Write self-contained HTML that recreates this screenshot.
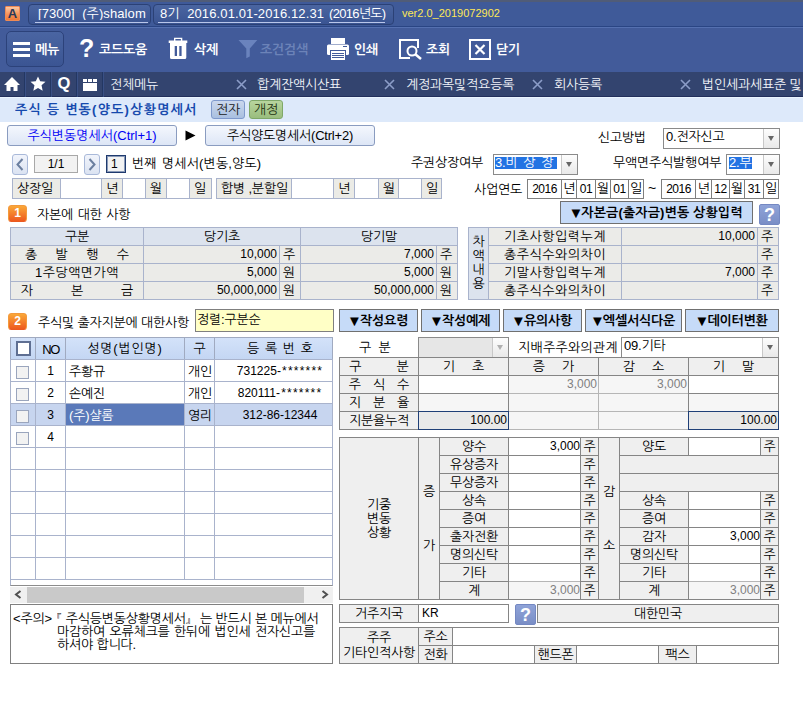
<!DOCTYPE html><html lang="ko"><head><meta charset="utf-8"><title>주식 등 변동(양도)상황명세서</title><style>
html,body{margin:0;padding:0}
body{width:803px;height:704px;position:relative;overflow:hidden;background:#fff;
 font:13px "Liberation Sans","NanumGothic","Noto Sans CJK KR",sans-serif;letter-spacing:-.2px;color:#000}
.a{position:absolute;box-sizing:border-box;white-space:nowrap;overflow:hidden}
.c{border:1px solid #a9b3cc;text-align:center}
.n{letter-spacing:0;font-size:12px}
.r{text-align:right;padding-right:2px}
.l{text-align:left;padding-left:3px}
.b{font-weight:bold}
.w{color:#fff}
.t1h{background:#dce3ee}
.t1c{background:#ebebe8}
.g{border-color:#858585}
.gl{background:#efefef}
.gw{background:#fff}
.gd{background:#f6f6f6;color:#808080}
.gh{background:linear-gradient(#d3e2f9,#c4d6f3);border-color:#a0aac0}
.gr{border-color:#a9b3cc;background:#fff;padding-top:1px}
.sel{background:#c7d5ef}
.btn{border:1px solid #8a9cc0;border-radius:3px;background:linear-gradient(#f4f7fd,#dde6f6);text-align:center}
.vb{border:1px solid #707070;background:#c6dbf8;font-weight:bold;text-align:center}
.tv{font-size:15px;line-height:10px;vertical-align:-1px;letter-spacing:-2px;margin-left:-2px;font-weight:normal}
.inp{border:1px solid #8a8a8a;background:#fff}
.cb{border:1px solid #9aa5bd;background:#f2f2f2}
.q{background:linear-gradient(#8fa3d8,#7a8ec6);border:1px solid #7488c2;border-radius:2px;color:#fff;font:bold 18px "Liberation Sans",sans-serif;text-align:center;letter-spacing:0}
.hl{background:#2273e3;color:#fff}
.dd{border-left:1px solid #c8c8c8;background:linear-gradient(#fdfdfd,#e9e9e9)}
.tri{width:0;height:0;border-left:4px solid transparent;border-right:4px solid transparent;border-top:6px solid #6a6a6a}
</style></head><body>
<div class="a " style="left:0px;top:0px;width:803px;height:2px;background:#505c78"></div>
<div class="a " style="left:0px;top:2px;width:803px;height:24px;background:#3f5a99"></div>
<div class="a " style="left:0px;top:26px;width:803px;height:1px;background:#2a4584"></div>
<div class="a " style="left:0px;top:27px;width:803px;height:1px;background:#5570b0"></div>
<div class="a " style="left:0px;top:28px;width:803px;height:44px;background:#425b9a"></div>
<div class="a " style="left:0px;top:72px;width:803px;height:24px;background:#33446f"></div>
<div class="a " style="left:0px;top:96px;width:803px;height:1px;background:#222f5c"></div>
<div class="a " style="left:0px;top:97px;width:803px;height:1px;background:#e9f4fe"></div>
<div class="a " style="left:0px;top:98px;width:803px;height:24px;background:#dde9fa"></div>
<div class="a " style="left:5px;top:6px;width:15px;height:15px;background:linear-gradient(#fbc7a2,#f6935a 55%,#f07a38);border:1px solid #ee8a55;border-radius:1px;color:#2a3858;font:bold 13px 'Liberation Sans',sans-serif;text-align:center;line-height:13px;letter-spacing:0">A</div>
<div class="a " style="left:28px;top:4px;width:123px;height:21px;border:1px solid #2b4176;border-radius:4px;background:linear-gradient(#4a65a1,#3a5492)"></div>
<div class="a " style="left:35px;top:22px;width:113px;height:1px;background:#b9c6ea"></div>
<div class="a w" style="left:38px;top:6px;width:112px;height:14px;letter-spacing:.1px">[7300]&nbsp; (주)shalom</div>
<div class="a " style="left:153px;top:4px;width:241px;height:21px;border:1px solid #2b4176;border-radius:4px;background:linear-gradient(#4a65a1,#3a5492)"></div>
<div class="a " style="left:158px;top:22px;width:163px;height:1px;background:#b9c6ea"></div>
<div class="a " style="left:329px;top:22px;width:56px;height:1px;background:#b9c6ea"></div>
<div class="a w" style="left:160px;top:6px;width:170px;height:14px;letter-spacing:.12px">8기&nbsp; 2016.01.01-2016.12.31</div>
<div class="a w" style="left:329px;top:6px;width:63px;height:14px;letter-spacing:-.7px">(2016년도)</div>
<div class="a " style="left:402px;top:7px;width:118px;height:14px;color:#fde857;font-size:11px;letter-spacing:0">ver2.0_2019072902</div>
<div class="a " style="left:6px;top:31px;width:58px;height:36px;border:1px solid #2c427a;border-radius:5px;background:linear-gradient(#4a65a2,#3b5593)"></div>
<div class="a " style="left:13px;top:42px;width:17px;height:3px;background:#fff"></div>
<div class="a " style="left:13px;top:48px;width:17px;height:3px;background:#fff"></div>
<div class="a " style="left:13px;top:54px;width:17px;height:3px;background:#fff"></div>
<div class="a w b" style="left:35px;top:42px;width:29px;height:16px;">메뉴</div>
<div class="a w" style="left:79px;top:34px;width:16px;height:28px;font:bold 25px 'Liberation Sans',sans-serif;letter-spacing:0;line-height:28px">?</div>
<div class="a w b" style="left:99px;top:42px;width:51px;height:16px;">코드도움</div>
<svg class="a" style="left:168px;top:37px" width="20" height="23" viewBox="0 0 20 23"><path fill="#fff" d="M6 .7h8.300v3H6z M.7 3.600h18.600v2.500H.7z M2 6h16.300v14.500a1.500 1.500 0 0 1-1.500 1.500H3.500a1.500 1.500 0 0 1-1.500-1.500z"/><path fill="#425b9a" d="M7.400 2h5.500v1.600H7.400z M6.700 9h2.300v10H6.700z M11.300 9h2.300v10h-2.300z"/></svg>
<div class="a w b" style="left:194px;top:42px;width:31px;height:16px;">삭제</div>
<svg class="a" style="left:238px;top:40px" width="20" height="19" viewBox="0 0 20 19"><path fill="#6a83bd" d="M.5 0H19.300L11.800 8.500V16.500L8.300 18.200V8.500z"/></svg>
<div class="a b" style="left:260px;top:42px;width:52px;height:16px;color:#6c83b8;">조건검색</div>
<svg class="a" style="left:326px;top:38px" width="24" height="23" viewBox="0 0 24 23"><path fill="#fff" d="M5 0h14v6H5z"/><rect x="1" y="6.400" width="22" height="10.600" rx="1.500" fill="#fff"/><path fill="#425b9a" shape-rendering="crispEdges" d="M17 8h4v1h-4z M4 12h16v5H4z"/><path fill="#fff" shape-rendering="crispEdges" d="M5 13h14v9H5z"/><path fill="#425b9a" shape-rendering="crispEdges" d="M6 15h12v1H6z M6 17h12v1H6z M6 19h12v1H6z"/></svg>
<div class="a w b" style="left:354px;top:42px;width:31px;height:16px;">인쇄</div>
<svg class="a" style="left:398px;top:38px" width="26" height="24" viewBox="0 0 26 24"><path fill="none" stroke="#fff" stroke-width="2" d="M12 20H2V2h18v8"/><circle cx="14" cy="13" r="4.5" fill="none" stroke="#fff" stroke-width="2"/><path stroke="#fff" stroke-width="2.5" d="M17 16l6 5"/></svg>
<div class="a w b" style="left:426px;top:42px;width:32px;height:16px;">조회</div>
<svg class="a" style="left:469px;top:39px" width="22" height="22" viewBox="0 0 22 22"><rect x="1" y="1" width="20" height="19" fill="none" stroke="#fff" stroke-width="2"/><path stroke="#fff" stroke-width="2.2" d="M6.5 6l9 9M15.500 6l-9 9"/></svg>
<div class="a w b" style="left:496px;top:42px;width:31px;height:16px;">닫기</div>
<div class="a " style="left:24px;top:72px;width:1px;height:25px;background:#233763"></div>
<div class="a " style="left:25px;top:72px;width:1px;height:25px;background:#3a5085"></div>
<div class="a " style="left:50px;top:72px;width:1px;height:25px;background:#233763"></div>
<div class="a " style="left:51px;top:72px;width:1px;height:25px;background:#3a5085"></div>
<div class="a " style="left:76px;top:72px;width:1px;height:25px;background:#233763"></div>
<div class="a " style="left:77px;top:72px;width:1px;height:25px;background:#3a5085"></div>
<div class="a " style="left:102px;top:72px;width:1px;height:25px;background:#233763"></div>
<div class="a " style="left:103px;top:72px;width:1px;height:25px;background:#3a5085"></div>
<svg class="a" style="left:3px;top:76px" width="18" height="16" viewBox="0 0 18 16"><path fill="#fff" d="M9 1l8 8h-2.500v6h-4v-4h-3v4h-4V9H1z"/></svg>
<svg class="a" style="left:30px;top:76px" width="16" height="15" viewBox="0 0 18 17"><path fill="#fff" d="M9 0.500l2.500 5.500 6 .6-4.500 4 1.300 6L9 13.500 3.700 16.600l1.300-6-4.500-4 6-.6z"/></svg>
<div class="a w" style="left:54px;top:73px;width:20px;height:20px;font:bold 16.500px 'Liberation Sans',sans-serif;letter-spacing:0;line-height:20px;text-align:center">Q</div>
<svg class="a" style="left:83px;top:79px" width="14" height="12" viewBox="0 0 14 12"><path fill="#fff" d="M0 0h4v3H0z M5 0h4v3H5z M10 0h4v3h-4z M0 4h14v8H0z"/></svg>
<div class="a w" style="left:110px;top:77px;width:140px;height:16px;line-height:16px;color:#f2f4fa">전체메뉴</div>
<div class="a w" style="left:257px;top:77px;width:140px;height:16px;line-height:16px;color:#f2f4fa">합계잔액시산표</div>
<svg class="a" style="left:236px;top:79px" width="11" height="11" viewBox="0 0 11 11"><path stroke="#8c9dc8" stroke-width="1.600" d="M1 1l9 9M10 1l-9 9"/></svg>
<div class="a w" style="left:406px;top:77px;width:140px;height:16px;line-height:16px;color:#f2f4fa">계정과목및적요등록</div>
<svg class="a" style="left:384px;top:79px" width="11" height="11" viewBox="0 0 11 11"><path stroke="#8c9dc8" stroke-width="1.600" d="M1 1l9 9M10 1l-9 9"/></svg>
<div class="a w" style="left:554px;top:77px;width:140px;height:16px;line-height:16px;color:#f2f4fa">회사등록</div>
<svg class="a" style="left:532px;top:79px" width="11" height="11" viewBox="0 0 11 11"><path stroke="#8c9dc8" stroke-width="1.600" d="M1 1l9 9M10 1l-9 9"/></svg>
<div class="a w" style="left:702px;top:77px;width:140px;height:16px;line-height:16px;color:#f2f4fa">법인세과세표준 및</div>
<svg class="a" style="left:680px;top:79px" width="11" height="11" viewBox="0 0 11 11"><path stroke="#8c9dc8" stroke-width="1.600" d="M1 1l9 9M10 1l-9 9"/></svg>
<div class="a b" style="left:15px;top:102px;width:215px;height:16px;color:#1549ad;letter-spacing:1.25px;line-height:16px">주식 등 변동(양도)상황명세서</div>
<div class="a " style="left:211px;top:100px;width:34px;height:19px;border:1px solid #7f99cc;border-radius:3px;background:linear-gradient(#cbd8ed,#a9bfe0);text-align:center;line-height:17px;color:#1a1a1a">전자</div>
<div class="a " style="left:249px;top:100px;width:34px;height:19px;border:1px solid #7fa868;border-radius:3px;background:linear-gradient(#b8d59e,#9abd7e);text-align:center;line-height:17px;color:#1f3312">개정</div>
<div class="a btn" style="left:7px;top:125px;width:170px;height:21px;line-height:19px;color:#0000f5;letter-spacing:0">주식변동명세서(Ctrl+1)</div>
<svg class="a" style="left:185px;top:130px" width="11" height="11" viewBox="0 0 11 11"><path d="M0.500 0.500L10.500 5.500L0.500 10.500z" fill="#000"/></svg>
<div class="a btn" style="left:205px;top:125px;width:170px;height:21px;line-height:19px">주식양도명세서(Ctrl+2)</div>
<div class="a " style="left:598px;top:130px;width:52px;height:16px;line-height:16px">신고방법</div>
<div class="a inp" style="left:663px;top:128px;width:117px;height:21px;background:#fff"></div>
<div class="a dd" style="left:763px;top:129px;width:16px;height:19px;"></div>
<div class="a" style="left:768px;top:136px;width:0;height:0;border-left:3.500px solid transparent;border-right:3.500px solid transparent;border-top:5px solid #666"></div>
<div class="a " style="left:666px;top:130px;width:96px;height:17px;line-height:14px">0.전자신고</div>
<div class="a " style="left:411px;top:155px;width:79px;height:16px;line-height:16px">주권상장여부</div>
<div class="a inp" style="left:493px;top:154px;width:85px;height:21px;background:#fff"></div>
<div class="a dd" style="left:561px;top:155px;width:16px;height:19px;"></div>
<div class="a" style="left:566px;top:162px;width:0;height:0;border-left:3.500px solid transparent;border-right:3.500px solid transparent;border-top:5px solid #666"></div>
<div class="a hl" style="left:495px;top:157px;width:62px;height:12px;line-height:11px;word-spacing:2.5px">3.비 상 장</div>
<div class="a " style="left:613px;top:155px;width:112px;height:16px;line-height:16px">무액면주식발행여부</div>
<div class="a inp" style="left:726px;top:154px;width:54px;height:21px;background:#fff"></div>
<div class="a dd" style="left:763px;top:155px;width:16px;height:19px;"></div>
<div class="a" style="left:768px;top:162px;width:0;height:0;border-left:3.500px solid transparent;border-right:3.500px solid transparent;border-top:5px solid #666"></div>
<div class="a hl" style="left:729px;top:157px;width:23px;height:12px;line-height:11px;word-spacing:2.5px">2.부</div>
<div class="a btn" style="left:12px;top:154px;width:16px;height:21px;border-color:#a9b9d9;background:linear-gradient(#f1f4fb,#dbe3f2)"></div>
<svg class="a" style="left:12px;top:154px" width="16" height="21" viewBox="0 0 16 21"><path d="M10.500 5L5.500 10.500L10.500 16" fill="none" stroke="#6b7f9f" stroke-width="2"/></svg>
<div class="a " style="left:34px;top:155px;width:44px;height:18px;border:1px solid #a8a8a8;background:#f2f2f2;font-size:12px;text-align:center;line-height:16px;letter-spacing:0">1/1</div>
<div class="a btn" style="left:84px;top:154px;width:16px;height:21px;border-color:#a9b9d9;background:linear-gradient(#f1f4fb,#dbe3f2)"></div>
<svg class="a" style="left:84px;top:154px" width="16" height="21" viewBox="0 0 16 21"><path d="M5.500 5L10.500 10.500L5.500 16" fill="none" stroke="#6b7f9f" stroke-width="2"/></svg>
<div class="a " style="left:106px;top:155px;width:20px;height:18px;border:1px solid #1f3a6e;box-shadow:inset 0 0 0 1px #8a9ab8;background:#f2f2f2;padding-left:4px;font-size:12px;line-height:16px;letter-spacing:0">1</div>
<div class="a " style="left:132px;top:156px;width:168px;height:16px;line-height:16px;letter-spacing:.15px;word-spacing:1.5px">번째 명세서(변동,양도)</div>
<div class="a c " style="left:12px;top:178px;width:49px;height:21px;line-height:19px;border-color:#a9b3cc;background:#ebebe6;text-align:left;padding-left:4px">상장일</div>
<div class="a c " style="left:60px;top:178px;width:42px;height:21px;line-height:19px;border-color:#a9b3cc;background:#fff"></div>
<div class="a c " style="left:101px;top:178px;width:22px;height:21px;line-height:19px;border-color:#a9b3cc;background:#ebebe6;text-align:left;padding-left:4px">년</div>
<div class="a c " style="left:122px;top:178px;width:24px;height:21px;line-height:19px;border-color:#a9b3cc;background:#fff"></div>
<div class="a c " style="left:145px;top:178px;width:22px;height:21px;line-height:19px;border-color:#a9b3cc;background:#ebebe6;text-align:left;padding-left:4px">월</div>
<div class="a c " style="left:166px;top:178px;width:24px;height:21px;line-height:19px;border-color:#a9b3cc;background:#fff"></div>
<div class="a c " style="left:189px;top:178px;width:23px;height:21px;line-height:19px;border-color:#a9b3cc;background:#ebebe6;text-align:left;padding-left:4px">일</div>
<div class="a c " style="left:216px;top:178px;width:76px;height:21px;line-height:19px;border-color:#a9b3cc;background:#ebebe6;text-align:left;padding-left:4px">합병 ,분할일</div>
<div class="a c " style="left:291px;top:178px;width:43px;height:21px;line-height:19px;border-color:#a9b3cc;background:#fff"></div>
<div class="a c " style="left:333px;top:178px;width:22px;height:21px;line-height:19px;border-color:#a9b3cc;background:#ebebe6;text-align:left;padding-left:4px">년</div>
<div class="a c " style="left:354px;top:178px;width:25px;height:21px;line-height:19px;border-color:#a9b3cc;background:#fff"></div>
<div class="a c " style="left:378px;top:178px;width:21px;height:21px;line-height:19px;border-color:#a9b3cc;background:#ebebe6;text-align:left;padding-left:4px">월</div>
<div class="a c " style="left:398px;top:178px;width:24px;height:21px;line-height:19px;border-color:#a9b3cc;background:#fff"></div>
<div class="a c " style="left:421px;top:178px;width:21px;height:21px;line-height:19px;border-color:#a9b3cc;background:#ebebe6;text-align:left;padding-left:4px">일</div>
<div class="a " style="left:474px;top:182px;width:51px;height:16px;line-height:16px">사업연도</div>
<div class="a c n" style="left:527px;top:179px;width:35px;height:20px;line-height:18px;border-color:#7f7f7f;background:#fff;letter-spacing:-.5px">2016</div>
<div class="a c " style="left:561px;top:179px;width:16px;height:20px;line-height:18px;border-color:#7f7f7f;background:#fff">년</div>
<div class="a c n" style="left:576px;top:179px;width:20px;height:20px;line-height:18px;border-color:#7f7f7f;background:#fff;letter-spacing:-.5px">01</div>
<div class="a c " style="left:595px;top:179px;width:16px;height:20px;line-height:18px;border-color:#7f7f7f;background:#fff">월</div>
<div class="a c n" style="left:610px;top:179px;width:19px;height:20px;line-height:18px;border-color:#7f7f7f;background:#fff;letter-spacing:-.5px">01</div>
<div class="a c " style="left:628px;top:179px;width:16px;height:20px;line-height:18px;border-color:#7f7f7f;background:#fff">일</div>
<div class="a " style="left:648px;top:180px;width:12px;height:16px;line-height:16px;letter-spacing:0;font-size:14px">~</div>
<div class="a c n" style="left:661px;top:179px;width:35px;height:20px;line-height:18px;border-color:#7f7f7f;background:#fff;letter-spacing:-.5px">2016</div>
<div class="a c " style="left:695px;top:179px;width:17px;height:20px;line-height:18px;border-color:#7f7f7f;background:#fff">년</div>
<div class="a c n" style="left:711px;top:179px;width:19px;height:20px;line-height:18px;border-color:#7f7f7f;background:#fff;letter-spacing:-.5px">12</div>
<div class="a c " style="left:729px;top:179px;width:16px;height:20px;line-height:18px;border-color:#7f7f7f;background:#fff">월</div>
<div class="a c n" style="left:744px;top:179px;width:20px;height:20px;line-height:18px;border-color:#7f7f7f;background:#fff;letter-spacing:-.5px">31</div>
<div class="a c " style="left:763px;top:179px;width:16px;height:20px;line-height:18px;border-color:#7f7f7f;background:#fff">일</div>
<div class="a " style="left:8px;top:205px;width:19px;height:17px;background:linear-gradient(#faa838,#ee5a1e);border:1px solid #f39a3c;border-bottom-color:#ea5a20;border-radius:3.500px;color:#fff;font:bold 12px 'Liberation Sans',sans-serif;text-align:center;line-height:15px;letter-spacing:0">1</div>
<div class="a " style="left:37px;top:207px;width:163px;height:16px;line-height:16px;word-spacing:1.2px">자본에 대한 사항</div>
<div class="a vb" style="left:560px;top:201px;width:193px;height:23px;line-height:22px;letter-spacing:.15px"><span class="tv">▼</span>자본금(출자금)변동 상황입력</div>
<div class="a q" style="left:759px;top:204px;width:21px;height:21px;line-height:20px">?</div>
<div class="a c t1h" style="left:10px;top:227px;width:134px;height:19px;line-height:17px;">구분</div>
<div class="a c t1h" style="left:143px;top:227px;width:158px;height:19px;line-height:17px;">당기초</div>
<div class="a c t1h" style="left:300px;top:227px;width:158px;height:19px;line-height:17px;">당기말</div>
<div class="a c t1c" style="left:10px;top:245px;width:134px;height:19px;line-height:17px;"><span style='letter-spacing:18.3px;margin-right:-18.3px'>총발행수</span></div>
<div class="a c t1c r n" style="left:143px;top:245px;width:137px;height:19px;line-height:17px;">10,000</div>
<div class="a c t1c l" style="left:279px;top:245px;width:22px;height:19px;line-height:17px;">주</div>
<div class="a c t1c r n" style="left:300px;top:245px;width:137px;height:19px;line-height:17px;">7,000</div>
<div class="a c t1c l" style="left:436px;top:245px;width:22px;height:19px;line-height:17px;">주</div>
<div class="a c t1c" style="left:10px;top:263px;width:134px;height:19px;line-height:17px;"><span style='letter-spacing:.5px'>1주당액면가액</span></div>
<div class="a c t1c r n" style="left:143px;top:263px;width:137px;height:19px;line-height:17px;">5,000</div>
<div class="a c t1c l" style="left:279px;top:263px;width:22px;height:19px;line-height:17px;">원</div>
<div class="a c t1c r n" style="left:300px;top:263px;width:137px;height:19px;line-height:17px;">5,000</div>
<div class="a c t1c l" style="left:436px;top:263px;width:22px;height:19px;line-height:17px;">원</div>
<div class="a c t1c" style="left:10px;top:281px;width:134px;height:19px;line-height:17px;"><span style='letter-spacing:37.8px;margin-right:-37.8px'>자본금</span></div>
<div class="a c t1c r n" style="left:143px;top:281px;width:137px;height:19px;line-height:17px;">50,000,000</div>
<div class="a c t1c l" style="left:279px;top:281px;width:22px;height:19px;line-height:17px;">원</div>
<div class="a c t1c r n" style="left:300px;top:281px;width:137px;height:19px;line-height:17px;">50,000,000</div>
<div class="a c t1c l" style="left:436px;top:281px;width:22px;height:19px;line-height:17px;">원</div>
<div class="a c t1h" style="left:468px;top:227px;width:21px;height:73px;line-height:71px;line-height:14px;white-space:normal;padding-top:7px">차<br>액<br>내<br>용</div>
<div class="a c t1c" style="left:488px;top:227px;width:134px;height:19px;line-height:17px;letter-spacing:.55px">기초사항입력누계</div>
<div class="a c t1c r n" style="left:621px;top:227px;width:137px;height:19px;line-height:17px;">10,000</div>
<div class="a c t1c l" style="left:757px;top:227px;width:22px;height:19px;line-height:17px;">주</div>
<div class="a c t1c" style="left:488px;top:245px;width:134px;height:19px;line-height:17px;letter-spacing:.55px">총주식수와의차이</div>
<div class="a c t1c r n" style="left:621px;top:245px;width:137px;height:19px;line-height:17px;"></div>
<div class="a c t1c l" style="left:757px;top:245px;width:22px;height:19px;line-height:17px;">주</div>
<div class="a c t1c" style="left:488px;top:263px;width:134px;height:19px;line-height:17px;letter-spacing:.55px">기말사항입력누계</div>
<div class="a c t1c r n" style="left:621px;top:263px;width:137px;height:19px;line-height:17px;">7,000</div>
<div class="a c t1c l" style="left:757px;top:263px;width:22px;height:19px;line-height:17px;">주</div>
<div class="a c t1c" style="left:488px;top:281px;width:134px;height:19px;line-height:17px;letter-spacing:.55px">총주식수와의차이</div>
<div class="a c t1c r n" style="left:621px;top:281px;width:137px;height:19px;line-height:17px;"></div>
<div class="a c t1c l" style="left:757px;top:281px;width:22px;height:19px;line-height:17px;">주</div>
<div class="a " style="left:8px;top:313px;width:19px;height:17px;background:linear-gradient(#faa838,#ee5a1e);border:1px solid #f39a3c;border-bottom-color:#ea5a20;border-radius:3.500px;color:#fff;font:bold 12px 'Liberation Sans',sans-serif;text-align:center;line-height:15px;letter-spacing:0">2</div>
<div class="a " style="left:38px;top:315px;width:157px;height:16px;line-height:16px">주식및 출자지분에 대한사항</div>
<div class="a " style="left:195px;top:309px;width:139px;height:23px;border:1px solid #7f7f7f;background:#ffffc6;padding-left:1px;line-height:19px">정렬:구분순</div>
<div class="a vb" style="left:339px;top:309px;width:79px;height:23px;line-height:22px"><span class="tv">▼</span>작성요령</div>
<div class="a vb" style="left:421px;top:309px;width:79px;height:23px;line-height:22px"><span class="tv">▼</span>작성예제</div>
<div class="a vb" style="left:503px;top:309px;width:79px;height:23px;line-height:22px"><span class="tv">▼</span>유의사항</div>
<div class="a vb" style="left:585px;top:309px;width:97px;height:23px;line-height:22px"><span class="tv">▼</span>엑셀서식다운</div>
<div class="a vb" style="left:685px;top:309px;width:94px;height:23px;line-height:22px"><span class="tv">▼</span>데이터변환</div>
<div class="a c gh" style="left:10px;top:337px;width:26px;height:23px;line-height:21px;"></div>
<div class="a c gh" style="left:35px;top:337px;width:31px;height:23px;line-height:21px;letter-spacing:-1.4px;font-size:13px;padding-top:1px">NO</div>
<div class="a c gh" style="left:65px;top:337px;width:120px;height:23px;line-height:21px;letter-spacing:.8px">성명(법인명)</div>
<div class="a c gh" style="left:184px;top:337px;width:31px;height:23px;line-height:21px;">구</div>
<div class="a c gh" style="left:214px;top:337px;width:119px;height:23px;line-height:21px;padding-left:13px"><span style='letter-spacing:5.7px;margin-right:-5.7px'>등록번호</span></div>
<div class="a " style="left:16px;top:341px;width:15px;height:15px;border:2px solid #5f6f92;background:#fff"></div>
<div class="a c gr " style="left:10px;top:359px;width:26px;height:23px;line-height:21px;"></div>
<div class="a c gr n " style="left:35px;top:359px;width:31px;height:23px;line-height:21px;">1</div>
<div class="a c gr l " style="left:65px;top:359px;width:120px;height:23px;line-height:21px;">주황규</div>
<div class="a c gr l " style="left:184px;top:359px;width:31px;height:23px;line-height:21px;padding-left:3px">개인</div>
<div class="a c gr n " style="left:214px;top:359px;width:119px;height:23px;line-height:21px;padding-left:13px">731225<span style='letter-spacing:1.2px'>-*******</span></div>
<div class="a cb" style="left:16px;top:366px;width:13px;height:13px;"></div>
<div class="a c gr " style="left:10px;top:381px;width:26px;height:23px;line-height:21px;"></div>
<div class="a c gr n " style="left:35px;top:381px;width:31px;height:23px;line-height:21px;">2</div>
<div class="a c gr l " style="left:65px;top:381px;width:120px;height:23px;line-height:21px;">손예진</div>
<div class="a c gr l " style="left:184px;top:381px;width:31px;height:23px;line-height:21px;padding-left:3px">개인</div>
<div class="a c gr n " style="left:214px;top:381px;width:119px;height:23px;line-height:21px;padding-left:13px">820111<span style='letter-spacing:1.2px'>-*******</span></div>
<div class="a cb" style="left:16px;top:388px;width:13px;height:13px;"></div>
<div class="a c gr sel" style="left:10px;top:403px;width:26px;height:23px;line-height:21px;"></div>
<div class="a c gr n sel" style="left:35px;top:403px;width:31px;height:23px;line-height:21px;">3</div>
<div class="a c gr l sel" style="left:65px;top:403px;width:120px;height:23px;line-height:21px;background:#5a79b9;color:#fff;">(주)샬롬</div>
<div class="a c gr l sel" style="left:184px;top:403px;width:31px;height:23px;line-height:21px;padding-left:3px">영리</div>
<div class="a c gr n sel" style="left:214px;top:403px;width:119px;height:23px;line-height:21px;padding-left:13px">312-86-12344</div>
<div class="a cb" style="left:16px;top:410px;width:13px;height:13px;"></div>
<div class="a c gr " style="left:10px;top:425px;width:26px;height:23px;line-height:21px;"></div>
<div class="a c gr n " style="left:35px;top:425px;width:31px;height:23px;line-height:21px;">4</div>
<div class="a c gr l " style="left:65px;top:425px;width:120px;height:23px;line-height:21px;"></div>
<div class="a c gr l " style="left:184px;top:425px;width:31px;height:23px;line-height:21px;padding-left:3px"></div>
<div class="a c gr n " style="left:214px;top:425px;width:119px;height:23px;line-height:21px;padding-left:13px"></div>
<div class="a cb" style="left:16px;top:432px;width:13px;height:13px;"></div>
<div class="a c gr " style="left:10px;top:447px;width:26px;height:23px;line-height:21px;"></div>
<div class="a c gr n " style="left:35px;top:447px;width:31px;height:23px;line-height:21px;"></div>
<div class="a c gr l " style="left:65px;top:447px;width:120px;height:23px;line-height:21px;"></div>
<div class="a c gr l " style="left:184px;top:447px;width:31px;height:23px;line-height:21px;padding-left:3px"></div>
<div class="a c gr n " style="left:214px;top:447px;width:119px;height:23px;line-height:21px;padding-left:13px"></div>
<div class="a c gr " style="left:10px;top:469px;width:26px;height:23px;line-height:21px;"></div>
<div class="a c gr n " style="left:35px;top:469px;width:31px;height:23px;line-height:21px;"></div>
<div class="a c gr l " style="left:65px;top:469px;width:120px;height:23px;line-height:21px;"></div>
<div class="a c gr l " style="left:184px;top:469px;width:31px;height:23px;line-height:21px;padding-left:3px"></div>
<div class="a c gr n " style="left:214px;top:469px;width:119px;height:23px;line-height:21px;padding-left:13px"></div>
<div class="a c gr " style="left:10px;top:491px;width:26px;height:23px;line-height:21px;"></div>
<div class="a c gr n " style="left:35px;top:491px;width:31px;height:23px;line-height:21px;"></div>
<div class="a c gr l " style="left:65px;top:491px;width:120px;height:23px;line-height:21px;"></div>
<div class="a c gr l " style="left:184px;top:491px;width:31px;height:23px;line-height:21px;padding-left:3px"></div>
<div class="a c gr n " style="left:214px;top:491px;width:119px;height:23px;line-height:21px;padding-left:13px"></div>
<div class="a c gr " style="left:10px;top:513px;width:26px;height:23px;line-height:21px;"></div>
<div class="a c gr n " style="left:35px;top:513px;width:31px;height:23px;line-height:21px;"></div>
<div class="a c gr l " style="left:65px;top:513px;width:120px;height:23px;line-height:21px;"></div>
<div class="a c gr l " style="left:184px;top:513px;width:31px;height:23px;line-height:21px;padding-left:3px"></div>
<div class="a c gr n " style="left:214px;top:513px;width:119px;height:23px;line-height:21px;padding-left:13px"></div>
<div class="a c gr " style="left:10px;top:535px;width:26px;height:23px;line-height:21px;"></div>
<div class="a c gr n " style="left:35px;top:535px;width:31px;height:23px;line-height:21px;"></div>
<div class="a c gr l " style="left:65px;top:535px;width:120px;height:23px;line-height:21px;"></div>
<div class="a c gr l " style="left:184px;top:535px;width:31px;height:23px;line-height:21px;padding-left:3px"></div>
<div class="a c gr n " style="left:214px;top:535px;width:119px;height:23px;line-height:21px;padding-left:13px"></div>
<div class="a c gr " style="left:10px;top:557px;width:26px;height:23px;line-height:21px;"></div>
<div class="a c gr n " style="left:35px;top:557px;width:31px;height:23px;line-height:21px;"></div>
<div class="a c gr l " style="left:65px;top:557px;width:120px;height:23px;line-height:21px;"></div>
<div class="a c gr l " style="left:184px;top:557px;width:31px;height:23px;line-height:21px;padding-left:3px"></div>
<div class="a c gr n " style="left:214px;top:557px;width:119px;height:23px;line-height:21px;padding-left:13px"></div>
<div class="a c gr" style="left:10px;top:579px;width:323px;height:7px;line-height:5px;border-bottom-color:#8c8c8c"></div>
<div class="a " style="left:10px;top:587px;width:323px;height:16px;background:#f0f0f0"></div>
<div class="a " style="left:27px;top:587px;width:277px;height:16px;background:#c9c9c9"></div>
<svg class="a" style="left:14px;top:590px" width="8" height="9" viewBox="0 0 8 9"><path d="M6.500 1L2 4.500L6.500 8" fill="none" stroke="#505050" stroke-width="2"/></svg>
<svg class="a" style="left:321px;top:590px" width="8" height="9" viewBox="0 0 8 9"><path d="M1.500 1L6 4.500L1.500 8" fill="none" stroke="#505050" stroke-width="2"/></svg>
<div class="a " style="left:10px;top:604px;width:323px;height:60px;border:1px solid #808080;background:#fff"></div>
<div class="a " style="left:13px;top:612px;width:44px;height:14px;line-height:14px">&lt;주의&gt;</div>
<div class="a " style="left:57px;top:612px;width:276px;height:14px;line-height:14px"><span style='letter-spacing:4px'>『</span>주식등변동상황명세서<span style='letter-spacing:3px'>』 </span>는 반드시 본 메뉴에서</div>
<div class="a " style="left:57px;top:625px;width:276px;height:14px;line-height:14px;word-spacing:1px">마감하여 오류체크를 한뒤에 법인세 전자신고를</div>
<div class="a " style="left:57px;top:638px;width:276px;height:14px;line-height:14px">하셔야 합니다.</div>
<div class="a " style="left:359px;top:340px;width:36px;height:16px;line-height:16px;word-spacing:4px">구 분</div>
<div class="a inp" style="left:418px;top:337px;width:91px;height:21px;background:#e6e6e6"></div>
<div class="a dd" style="left:492px;top:338px;width:16px;height:19px;"></div>
<div class="a" style="left:497px;top:345px;width:0;height:0;border-left:3.500px solid transparent;border-right:3.500px solid transparent;border-top:5px solid #b0b0b0"></div>
<div class="a " style="left:518px;top:340px;width:100px;height:16px;line-height:16px;letter-spacing:.25px">지배주주와의관계</div>
<div class="a inp" style="left:621px;top:337px;width:158px;height:21px;background:#fff"></div>
<div class="a dd" style="left:762px;top:338px;width:16px;height:19px;"></div>
<div class="a" style="left:767px;top:345px;width:0;height:0;border-left:3.500px solid transparent;border-right:3.500px solid transparent;border-top:5px solid #666"></div>
<div class="a " style="left:624px;top:339px;width:137px;height:17px;line-height:14px">09.기타</div>
<div class="a c g gl" style="left:339px;top:357px;width:80px;height:19px;line-height:17px;"><span style='letter-spacing:35px;margin-right:-35px'>구분</span></div>
<div class="a c g gl" style="left:418px;top:357px;width:91px;height:19px;line-height:17px;"><span style='letter-spacing:17px;margin-right:-17px'>기초</span></div>
<div class="a c g gl" style="left:508px;top:357px;width:91px;height:19px;line-height:17px;"><span style='letter-spacing:17px;margin-right:-17px'>증가</span></div>
<div class="a c g gl" style="left:598px;top:357px;width:91px;height:19px;line-height:17px;"><span style='letter-spacing:17px;margin-right:-17px'>감소</span></div>
<div class="a c g gl" style="left:688px;top:357px;width:91px;height:19px;line-height:17px;"><span style='letter-spacing:17px;margin-right:-17px'>기말</span></div>
<div class="a c g gl" style="left:339px;top:375px;width:80px;height:19px;line-height:17px;"><span style='letter-spacing:12px;margin-right:-12px'>주식수</span></div>
<div class="a c g r n gd" style="left:508px;top:375px;width:91px;height:19px;line-height:17px;border-color:#b6b6b6;padding-right:1px">3,000</div>
<div class="a c g r n gd" style="left:598px;top:375px;width:91px;height:19px;line-height:17px;border-color:#b6b6b6;padding-right:1px">3,000</div>
<div class="a c g r n gw" style="left:418px;top:375px;width:91px;height:19px;line-height:17px;padding-right:1px"></div>
<div class="a c g r n gw" style="left:688px;top:375px;width:91px;height:19px;line-height:17px;padding-right:1px"></div>
<div class="a c g gl" style="left:339px;top:393px;width:80px;height:19px;line-height:17px;"><span style='letter-spacing:12px;margin-right:-12px'>지분율</span></div>
<div class="a c g r n gd" style="left:508px;top:393px;width:91px;height:19px;line-height:17px;border-color:#b6b6b6;padding-right:1px"></div>
<div class="a c g r n gd" style="left:598px;top:393px;width:91px;height:19px;line-height:17px;border-color:#b6b6b6;padding-right:1px"></div>
<div class="a c g r n gd" style="left:418px;top:393px;width:91px;height:19px;line-height:17px;padding-right:1px"></div>
<div class="a c g r n gd" style="left:688px;top:393px;width:91px;height:19px;line-height:17px;padding-right:1px"></div>
<div class="a c g gl" style="left:339px;top:411px;width:80px;height:19px;line-height:17px;">지분율누적</div>
<div class="a c g r n gd" style="left:508px;top:411px;width:91px;height:19px;line-height:17px;border-color:#b6b6b6;padding-right:1px"></div>
<div class="a c g r n gd" style="left:598px;top:411px;width:91px;height:19px;line-height:17px;border-color:#b6b6b6;padding-right:1px"></div>
<div class="a c g r n gl" style="left:418px;top:411px;width:91px;height:19px;line-height:17px;padding-right:1px">100.00</div>
<div class="a c g r n gl" style="left:688px;top:411px;width:91px;height:19px;line-height:17px;padding-right:1px">100.00</div>
<div class="a " style="left:508px;top:375px;width:181px;height:1px;background:#858585"></div>
<div class="a c r n" style="left:418px;top:411px;width:91px;height:19px;line-height:17px;border-color:#1f3f77;background:#e9e9e9;padding-right:1px">100.00</div>
<div class="a c r n" style="left:688px;top:411px;width:91px;height:19px;line-height:17px;border-color:#1f3f77;background:#e9e9e9;padding-right:1px">100.00</div>
<div class="a c g gl" style="left:339px;top:437px;width:80px;height:163px;line-height:161px;line-height:14px;white-space:normal;padding-top:60px">기중<br>변동<br>상황</div>
<div class="a c g gl" style="left:418px;top:437px;width:22px;height:163px;line-height:161px;"></div>
<div class="a " style="left:419px;top:484px;width:20px;height:16px;text-align:center;line-height:16px">증</div>
<div class="a " style="left:419px;top:538px;width:20px;height:16px;text-align:center;line-height:16px">가</div>
<div class="a c g gl" style="left:598px;top:437px;width:22px;height:163px;line-height:161px;"></div>
<div class="a " style="left:599px;top:484px;width:20px;height:16px;text-align:center;line-height:16px">감</div>
<div class="a " style="left:599px;top:538px;width:20px;height:16px;text-align:center;line-height:16px">소</div>
<div class="a c g r n gw" style="left:508px;top:437px;width:73px;height:19px;line-height:17px;padding-right:0">3,000</div>
<div class="a c g gl" style="left:439px;top:437px;width:70px;height:19px;line-height:17px;">양수</div>
<div class="a c g gl" style="left:580px;top:437px;width:19px;height:19px;line-height:17px;">주</div>
<div class="a c g r n gw" style="left:688px;top:437px;width:73px;height:19px;line-height:17px;padding-right:0"></div>
<div class="a c g gl" style="left:619px;top:437px;width:70px;height:19px;line-height:17px;">양도</div>
<div class="a c g gl" style="left:760px;top:437px;width:19px;height:19px;line-height:17px;">주</div>
<div class="a c g r n gw" style="left:508px;top:455px;width:73px;height:19px;line-height:17px;padding-right:0"></div>
<div class="a c g gl" style="left:439px;top:455px;width:70px;height:19px;line-height:17px;">유상증자</div>
<div class="a c g gl" style="left:580px;top:455px;width:19px;height:19px;line-height:17px;">주</div>
<div class="a c g gl" style="left:619px;top:455px;width:160px;height:19px;line-height:17px;"></div>
<div class="a c g r n gw" style="left:508px;top:473px;width:73px;height:19px;line-height:17px;padding-right:0"></div>
<div class="a c g gl" style="left:439px;top:473px;width:70px;height:19px;line-height:17px;">무상증자</div>
<div class="a c g gl" style="left:580px;top:473px;width:19px;height:19px;line-height:17px;">주</div>
<div class="a c g gl" style="left:619px;top:473px;width:160px;height:19px;line-height:17px;"></div>
<div class="a c g r n gw" style="left:508px;top:491px;width:73px;height:19px;line-height:17px;padding-right:0"></div>
<div class="a c g gl" style="left:439px;top:491px;width:70px;height:19px;line-height:17px;">상속</div>
<div class="a c g gl" style="left:580px;top:491px;width:19px;height:19px;line-height:17px;">주</div>
<div class="a c g r n gw" style="left:688px;top:491px;width:73px;height:19px;line-height:17px;padding-right:0"></div>
<div class="a c g gl" style="left:619px;top:491px;width:70px;height:19px;line-height:17px;">상속</div>
<div class="a c g gl" style="left:760px;top:491px;width:19px;height:19px;line-height:17px;">주</div>
<div class="a c g r n gw" style="left:508px;top:509px;width:73px;height:19px;line-height:17px;padding-right:0"></div>
<div class="a c g gl" style="left:439px;top:509px;width:70px;height:19px;line-height:17px;">증여</div>
<div class="a c g gl" style="left:580px;top:509px;width:19px;height:19px;line-height:17px;">주</div>
<div class="a c g r n gw" style="left:688px;top:509px;width:73px;height:19px;line-height:17px;padding-right:0"></div>
<div class="a c g gl" style="left:619px;top:509px;width:70px;height:19px;line-height:17px;">증여</div>
<div class="a c g gl" style="left:760px;top:509px;width:19px;height:19px;line-height:17px;">주</div>
<div class="a c g r n gw" style="left:508px;top:527px;width:73px;height:19px;line-height:17px;padding-right:0"></div>
<div class="a c g gl" style="left:439px;top:527px;width:70px;height:19px;line-height:17px;">출자전환</div>
<div class="a c g gl" style="left:580px;top:527px;width:19px;height:19px;line-height:17px;">주</div>
<div class="a c g r n gw" style="left:688px;top:527px;width:73px;height:19px;line-height:17px;padding-right:0">3,000</div>
<div class="a c g gl" style="left:619px;top:527px;width:70px;height:19px;line-height:17px;">감자</div>
<div class="a c g gl" style="left:760px;top:527px;width:19px;height:19px;line-height:17px;">주</div>
<div class="a c g r n gw" style="left:508px;top:545px;width:73px;height:19px;line-height:17px;padding-right:0"></div>
<div class="a c g gl" style="left:439px;top:545px;width:70px;height:19px;line-height:17px;">명의신탁</div>
<div class="a c g gl" style="left:580px;top:545px;width:19px;height:19px;line-height:17px;">주</div>
<div class="a c g r n gw" style="left:688px;top:545px;width:73px;height:19px;line-height:17px;padding-right:0"></div>
<div class="a c g gl" style="left:619px;top:545px;width:70px;height:19px;line-height:17px;">명의신탁</div>
<div class="a c g gl" style="left:760px;top:545px;width:19px;height:19px;line-height:17px;">주</div>
<div class="a c g r n gw" style="left:508px;top:563px;width:73px;height:19px;line-height:17px;padding-right:0"></div>
<div class="a c g gl" style="left:439px;top:563px;width:70px;height:19px;line-height:17px;">기타</div>
<div class="a c g gl" style="left:580px;top:563px;width:19px;height:19px;line-height:17px;">주</div>
<div class="a c g r n gw" style="left:688px;top:563px;width:73px;height:19px;line-height:17px;padding-right:0"></div>
<div class="a c g gl" style="left:619px;top:563px;width:70px;height:19px;line-height:17px;">기타</div>
<div class="a c g gl" style="left:760px;top:563px;width:19px;height:19px;line-height:17px;">주</div>
<div class="a c g r n gd" style="left:508px;top:581px;width:73px;height:19px;line-height:17px;padding-right:0;border-color:#b6b6b6 #b6b6b6 #858585">3,000</div>
<div class="a c g gl" style="left:439px;top:581px;width:70px;height:19px;line-height:17px;">계</div>
<div class="a c g gl" style="left:580px;top:581px;width:19px;height:19px;line-height:17px;">주</div>
<div class="a c g r n gd" style="left:688px;top:581px;width:73px;height:19px;line-height:17px;padding-right:0;border-color:#b6b6b6 #b6b6b6 #858585">3,000</div>
<div class="a c g gl" style="left:619px;top:581px;width:70px;height:19px;line-height:17px;">계</div>
<div class="a c g gl" style="left:760px;top:581px;width:19px;height:19px;line-height:17px;">주</div>
<div class="a c g gl" style="left:339px;top:604px;width:80px;height:19px;line-height:17px;">거주지국</div>
<div class="a c g gw l n" style="left:418px;top:604px;width:91px;height:19px;line-height:17px;">KR</div>
<div class="a q" style="left:515px;top:604px;width:21px;height:21px;line-height:20px">?</div>
<div class="a c g gl" style="left:537px;top:604px;width:242px;height:19px;line-height:17px;">대한민국</div>
<div class="a c g gl" style="left:339px;top:627px;width:80px;height:37px;line-height:35px;line-height:15px;white-space:normal;padding-top:2px">주주<br>기타인적사항</div>
<div class="a c g gl" style="left:418px;top:627px;width:35px;height:19px;line-height:17px;">주소</div>
<div class="a c g gw" style="left:452px;top:627px;width:327px;height:19px;line-height:17px;"></div>
<div class="a c g gl" style="left:418px;top:645px;width:35px;height:19px;line-height:17px;">전화</div>
<div class="a c g gw" style="left:452px;top:645px;width:83px;height:19px;line-height:17px;"></div>
<div class="a c g gl" style="left:534px;top:645px;width:43px;height:19px;line-height:17px;">핸드폰</div>
<div class="a c g gw" style="left:576px;top:645px;width:83px;height:19px;line-height:17px;"></div>
<div class="a c g gl" style="left:658px;top:645px;width:39px;height:19px;line-height:17px;">팩스</div>
<div class="a c g gw" style="left:696px;top:645px;width:83px;height:19px;line-height:17px;"></div>
</body></html>
